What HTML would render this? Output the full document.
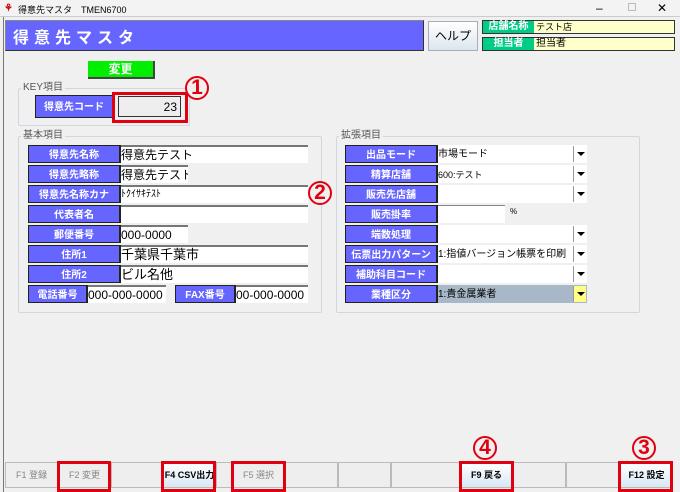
<!DOCTYPE html>
<html><head><meta charset="utf-8"><style>
*{box-sizing:border-box;margin:0;padding:0}
body{width:680px;height:492px;background:#f0f0f0;font-family:"Liberation Sans","Noto Sans CJK JP",sans-serif;position:relative;overflow:hidden;font-size:11px;color:#000}
.a{position:absolute}
.tb{left:0;top:0;width:680px;height:17px;background:#f3f3f3;border-bottom:1px solid #ccc}
.lbl{position:absolute;background:#6666ff;color:#fff;font-weight:bold;font-size:10px;height:18px;border:1px solid #222;border-right:2px solid #222;text-align:center;line-height:12px;padding-top:4px}
.inp{position:absolute;background:#fff;height:18px;font-size:12px;border-top:2px solid #777;white-space:nowrap;overflow:hidden;line-height:14px;padding-top:1px}
.grp{position:absolute;border:1px solid #cfd8e0;border-radius:2px}
.gt{position:absolute;background:#f0f0f0;color:#555;font-size:10px;padding:0 2px;line-height:12px}
.dd{position:absolute;width:13px;height:16px;background:#fff;border-left:1px solid #999;top:1px;right:1px}
.dd:after{content:"";position:absolute;left:3px;top:6px;border-left:4px solid transparent;border-right:4px solid transparent;border-top:4px solid #000}
.fk{position:absolute;top:462px;height:26px;border:1px solid #bbb;background:#eee;color:#888;font-size:9px;text-align:center;line-height:24px}
.fk.on{background:linear-gradient(#fff,#d8e8f4);color:#000;font-weight:bold}
.red{position:absolute;border:3px solid #e00010}
.num{position:absolute;color:#e00010;font-weight:bold;font-size:21px;width:24px;height:24px;border:2.5px solid #e00010;border-radius:50%;text-align:center;line-height:19px;background:#f0f0f0}
</style></head><body>
<div class="a tb"></div>
<div class="a" style="left:4px;top:3px;font-size:10px;color:#c00;font-weight:bold">&#x2698;</div>
<div class="a" style="left:18px;top:3px;font-size:9px">得意先マスタ　TMEN6700</div>
<div class="a" style="left:596px;top:1px;font-size:12px">–</div>
<div class="a" style="left:628px;top:3px;width:8px;height:8px;border:1px solid #bbb"></div>
<div class="a" style="left:657px;top:1px;font-size:12px">✕</div>
<div class="a" style="left:3px;top:17px;width:1px;height:475px;background:#777"></div>
<div class="a" style="left:5px;top:20px;width:419px;height:31px;background:#6666ff;border:1px solid #333;border-top-color:#888;border-left-color:#888;color:#fff;font-size:16px;font-weight:bold;letter-spacing:5px;padding:3px 0 0 7px">得意先マスタ</div>
<div class="a" style="left:428px;top:21px;width:50px;height:30px;border:1px solid #aab;background:linear-gradient(#fff,#dce6ef);font-size:12px;text-align:center;line-height:28px">ヘルプ</div>
<div class="a" style="left:482px;top:20px;width:193px;height:14px;border:1px solid #333;background:#ffffcc"></div>
<div class="a" style="left:483px;top:21px;width:51px;height:12px;background:#00cc88;color:#fff;font-weight:bold;font-size:10px;text-align:center;line-height:12px">店舗名称</div>
<div class="a" style="left:536px;top:21px;font-size:9px;line-height:12px">テスト店</div>
<div class="a" style="left:482px;top:37px;width:193px;height:14px;border:1px solid #333;background:#ffffcc"></div>
<div class="a" style="left:483px;top:38px;width:51px;height:12px;background:#00cc88;color:#fff;font-weight:bold;font-size:10px;text-align:center;line-height:12px">担当者</div>
<div class="a" style="left:536px;top:38px;font-size:10px;line-height:12px">担当者</div>

<div class="a" style="left:88px;top:61px;width:67px;height:18px;background:#00ee00;border-right:2px solid #444;border-bottom:2px solid #444;color:#fff;font-weight:bold;font-size:12px;text-align:center;line-height:16px">変更</div>

<div class="grp" style="left:18px;top:88px;width:172px;height:38px"></div>
<div class="gt" style="left:21px;top:82px">KEY項目</div>
<div class="lbl" style="left:35px;top:95px;width:79px;height:23px;padding-top:6px">得意先コード</div>
<div class="a" style="left:118px;top:96px;width:63px;height:21px;border:1px solid #333;background:#eee;padding:3px 3px 0 0;text-align:right;font-size:12px">23</div>
<div class="red" style="left:112px;top:92px;width:76px;height:31px"></div>
<div class="num" style="left:185px;top:76px">1</div>

<div class="grp" style="left:18px;top:136px;width:304px;height:177px"></div>
<div class="gt" style="left:21px;top:130px">基本項目</div>
<div class="lbl" style="left:28px;top:145px;width:93px">得意先名称</div><div class="inp" style="left:121px;top:145px;width:187px">得意先テスト</div>
<div class="lbl" style="left:28px;top:165px;width:93px">得意先略称</div><div class="inp" style="left:121px;top:165px;width:67px">得意先テスト</div>
<div class="lbl" style="left:28px;top:185px;width:93px">得意先名称カナ</div><div class="inp" style="left:121px;top:185px;width:187px;font-size:10px">ﾄｸｲｻｷﾃｽﾄ</div>
<div class="lbl" style="left:28px;top:205px;width:93px">代表者名</div><div class="inp" style="left:121px;top:205px;width:187px"></div>
<div class="lbl" style="left:28px;top:225px;width:93px">郵便番号</div><div class="inp" style="left:121px;top:225px;width:67px">000-0000</div>
<div class="lbl" style="left:28px;top:245px;width:93px">住所1</div><div class="inp" style="left:121px;top:245px;width:187px;font-size:13px">千葉県千葉市</div>
<div class="lbl" style="left:28px;top:265px;width:93px">住所2</div><div class="inp" style="left:121px;top:265px;width:187px;font-size:13px">ビル名他</div>
<div class="lbl" style="left:28px;top:285px;width:60px">電話番号</div><div class="inp" style="left:88px;top:285px;width:78px">000-000-0000</div>
<div class="lbl" style="left:175px;top:285px;width:61px">FAX番号</div><div class="inp" style="left:236px;top:285px;width:72px">00-000-0000</div>
<div class="num" style="left:308px;top:181px">2</div>

<div class="grp" style="left:336px;top:136px;width:304px;height:177px"></div>
<div class="gt" style="left:339px;top:130px">拡張項目</div>
<div class="lbl" style="left:345px;top:145px;width:93px">出品モード</div><div class="inp" style="left:438px;top:145px;width:149px;border:none;font-size:10px;padding-top:3px">市場モード<div class="dd"></div></div>
<div class="lbl" style="left:345px;top:165px;width:93px">精算店舗</div><div class="inp" style="left:438px;top:165px;width:149px;border:none;font-size:9px;padding-top:3px">600:テスト<div class="dd"></div></div>
<div class="lbl" style="left:345px;top:185px;width:93px">販売先店舗</div><div class="inp" style="left:438px;top:185px;width:149px;border:none"><div class="dd"></div></div>
<div class="lbl" style="left:345px;top:205px;width:93px">販売掛率</div><div class="inp" style="left:438px;top:205px;width:67px;border-top:1px solid #888"></div>
<div class="a" style="left:510px;top:207px;font-size:8px">%</div>
<div class="lbl" style="left:345px;top:225px;width:93px">端数処理</div><div class="inp" style="left:438px;top:225px;width:149px;border:none"><div class="dd"></div></div>
<div class="lbl" style="left:345px;top:245px;width:93px">伝票出力パターン</div><div class="inp" style="left:438px;top:245px;width:149px;border:none;font-size:10px;padding-top:3px">1:指値バージョン帳票を印刷<div class="dd"></div></div>
<div class="lbl" style="left:345px;top:265px;width:93px">補助科目コード</div><div class="inp" style="left:438px;top:265px;width:149px;border:none"><div class="dd"></div></div>
<div class="lbl" style="left:345px;top:285px;width:93px">業種区分</div><div class="inp" style="left:438px;top:285px;width:149px;border:none;background:#a8b8c8;font-size:10px;padding-top:3px">1:貴金属業者<div class="dd" style="background:#ffff88"></div></div>

<div class="fk" style="left:5px;width:53px">F1 登録</div>
<div class="fk" style="left:58px;width:53px">F2 変更</div>
<div class="fk" style="left:111px;width:52px"></div>
<div class="fk on" style="left:163px;width:53px">F4 CSV出力</div>
<div class="fk" style="left:216px;width:69px;padding-left:16px">F5 選択</div>
<div class="fk" style="left:285px;width:53px"></div>
<div class="fk" style="left:338px;width:53px"></div>
<div class="fk" style="left:391px;width:69px"></div>
<div class="fk on" style="left:460px;width:53px">F9 戻る</div>
<div class="fk" style="left:513px;width:53px"></div>
<div class="fk" style="left:566px;width:54px"></div>
<div class="fk on" style="left:620px;width:53px">F12 設定</div>
<div class="red" style="left:57px;top:461px;width:54px;height:31px"></div>
<div class="red" style="left:161px;top:461px;width:55px;height:31px"></div>
<div class="red" style="left:231px;top:461px;width:55px;height:31px"></div>
<div class="red" style="left:459px;top:461px;width:55px;height:31px"></div>
<div class="red" style="left:618px;top:461px;width:55px;height:31px"></div>
<div class="num" style="left:473px;top:436px">4</div>
<div class="num" style="left:632px;top:436px">3</div>
</body></html>
